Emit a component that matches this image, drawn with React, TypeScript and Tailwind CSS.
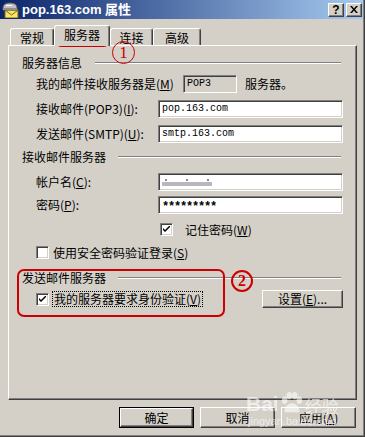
import React from "react";

const CJK = "font-['Noto_Sans_CJK_SC','Noto_Sans',sans-serif]";
const MONO = "font-['Liberation_Mono','Noto_Sans_CJK_SC',monospace]";

const sunken =
  "border border-t-[#808080] border-l-[#808080] border-r-white border-b-white shadow-[inset_1px_1px_0_#404040,inset_-1px_-1px_0_#d4d0c8]";
const raised =
  "border border-t-white border-l-white border-r-[#404040] border-b-[#404040] shadow-[inset_-1px_-1px_0_#808080]";

function U({ c }: { c: string }) {
  return (
    <span>
      (<span className="underline underline-offset-[1px]">{c}</span>)
    </span>
  );
}

function Header({ text, gap = 12 }: { text: string; gap?: number }) {
  return (
    <div className="flex h-[16px] items-center">
      <span className="text-[12px] leading-none text-black">{text}</span>
      <div
        className="h-[2px] flex-1 border-t border-t-[#808080] border-b border-b-white mr-[15px]"
        style={{ marginLeft: gap }}
      />
    </div>
  );
}

function Check({ checked }: { checked: boolean }) {
  return (
    <div className={`w-[13px] h-[13px] bg-white shrink-0 flex items-center justify-center ${sunken}`}>
      {checked && (
        <svg width="7" height="7" viewBox="0 0 7 7">
          <path d="M0 2 L0 4 L2 6 L7 1 L7 -1 L2 4 Z" fill="black" />
        </svg>
      )}
    </div>
  );
}

function Field({ children }: { children?: React.ReactNode }) {
  return (
    <div className={`w-[185px] h-[18px] bg-white flex items-center pl-[3px] ${sunken}`}>{children}</div>
  );
}

function Btn({ children, def, w = 75 }: { children: React.ReactNode; def?: boolean; w?: number }) {
  const inner = (
    <div
      className={`h-full w-full bg-[#d4d0c8] flex items-center justify-center text-[12px] leading-none text-black ${raised}`}
    >
      {children}
    </div>
  );
  return (
    <div className={`h-[21px] ${def ? "border border-black" : ""}`} style={{ width: w }}>
      {inner}
    </div>
  );
}

function Tab({ label, w, selected }: { label: string; w: number; selected?: boolean }) {
  return (
    <div
      className={`bg-[#d4d0c8] border-t border-l border-t-white border-l-white border-r border-r-[#404040] shadow-[inset_-1px_0_0_#808080] rounded-t-[3px] flex justify-center text-[12px] leading-none text-black ${
        selected ? "h-[21px] relative top-[1px] z-10 pt-[3px]" : "h-[17px] pt-[3px]"
      }`}
      style={{ width: w }}
    >
      {label}
    </div>
  );
}

export default function App() {
  return (
    <div
      className={`relative w-[365px] h-[437px] bg-[#d4d0c8] overflow-hidden border-r border-b border-r-[#404040] border-b-[#404040] ${CJK}`}
    >
      <div className="h-full w-full flex flex-col shadow-[inset_-1px_-1px_0_#808080]">
        {/* title bar */}
        <div className="h-[19px] mr-[1px] flex items-center bg-[linear-gradient(to_right,#0a246a,#a6caf0)]">
          <svg width="17" height="16" viewBox="0 0 17 16" className="ml-[2px]">
            <rect x="3" y="8" width="13" height="8" fill="#f8e860" stroke="#806020" strokeWidth="1" />
            <path d="M3.5 8.5 L9.5 13 L15.5 8.5" fill="none" stroke="#806020" />
            <path d="M1 6 Q1 1 8 1 Q15 1 15 6 L15 8 L1 8 Z" fill="#c0c0c0" stroke="#606060" />
            <rect x="1" y="6" width="14" height="2" fill="#909090" />
            <rect x="4" y="3" width="6" height="1" fill="#ffffff" />
          </svg>
          <span className="ml-[3px] text-white font-bold text-[13px] leading-none font-['Liberation_Sans','Noto_Sans_CJK_SC',sans-serif]">
            pop.163.com 属性
          </span>
          <div className="ml-auto flex gap-[2px] mr-[1px]">
            <div className={`w-[16px] h-[14px] bg-[#d4d0c8] flex items-center justify-center ${raised}`}>
              <span className="text-[12px] font-bold leading-none font-['Liberation_Sans',sans-serif]">?</span>
            </div>
            <div className={`w-[16px] h-[14px] bg-[#d4d0c8] flex items-center justify-center ${raised}`}>
              <svg width="8" height="7" viewBox="0 0 8 7">
                <path d="M0 0 L2 0 L4 2.5 L6 0 L8 0 L5 3.5 L8 7 L6 7 L4 4.5 L2 7 L0 7 L3 3.5 Z" fill="black" />
              </svg>
            </div>
          </div>
        </div>

        {/* tabs */}
        <div className="mt-[7px] ml-[10px] h-[19px] flex items-end">
          <Tab label="常规" w={44} />
          <Tab label="服务器" w={56} selected />
          <Tab label="连接" w={43} />
          <Tab label="高级" w={48} />
        </div>

        {/* panel */}
        <div className="ml-[8px] w-[349px] h-[355px] border-t border-l border-t-white border-l-white border-r border-b border-r-[#404040] border-b-[#404040] shadow-[inset_-1px_-1px_0_#808080] flex flex-col pl-[13px] text-[12px] leading-none text-black">
          <div className="mt-[9px]">
            <Header text="服务器信息" gap={13} />
          </div>
          <div className="mt-[4px] h-[18px] flex items-center pl-[14px]">
            <span className="w-[147px]">
              我的邮件接收服务器是<U c="M" />
            </span>
            <div className={`w-[54px] h-[18px] bg-[#d4d0c8] flex items-center pl-[3px] ${MONO} text-[10px] ${sunken}`}>
              POP3
            </div>
            <span className="ml-[8px]">服务器。</span>
          </div>
          <div className="mt-[7px] h-[18px] flex items-center pl-[14px]">
            <span className="w-[122px]">
              接收邮件(POP3)<U c="I" />:
            </span>
            <Field>
              <span className={`${MONO} text-[10px]`}>pop.163.com</span>
            </Field>
          </div>
          <div className="mt-[7px] h-[18px] flex items-center pl-[14px]">
            <span className="w-[122px]">
              发送邮件(SMTP)<U c="U" />:
            </span>
            <Field>
              <span className={`${MONO} text-[10px]`}>smtp.163.com</span>
            </Field>
          </div>

          <div className="mt-[6px]">
            <Header text="接收邮件服务器" gap={12} />
          </div>
          <div className="mt-[8px] h-[18px] flex items-center pl-[14px]">
            <span className="w-[122px]">
              帐户名<U c="C" />:
            </span>
            <Field>
              <div className="flex flex-col gap-[1px]">
                <div className="w-[50px] h-[2px] flex justify-between px-[3px] opacity-60">
                  <div className="w-[2px] h-[2px] bg-[#404040]" />
                  <div className="w-[2px] h-[2px] bg-[#404040]" />
                  <div className="w-[2px] h-[2px] bg-[#404040]" />
                </div>
                <div className="w-[50px] h-[4px] bg-[#b8b8c0] blur-[0.6px]" />
              </div>
            </Field>
          </div>
          <div className="mt-[5px] h-[18px] flex items-center pl-[14px]">
            <span className="w-[122px]">
              密码<U c="P" />:
            </span>
            <Field>
              <span className={`${MONO} text-[12px] tracking-[-1.2px] font-bold pt-[3px]`}>*********</span>
            </Field>
          </div>
          <div className="mt-[9px] h-[13px] flex items-center pl-[138px]">
            <Check checked />
            <span className="ml-[12px]">
              记住密码<U c="W" />
            </span>
          </div>
          <div className="mt-[10px] h-[13px] flex items-center pl-[14px]">
            <Check checked={false} />
            <span className="ml-[4px]">
              使用安全密码验证登录<U c="S" />
            </span>
          </div>

          <div className="mt-[11px]">
            <Header text="发送邮件服务器" gap={12} />
          </div>
          <div className="mt-[4px] h-[18px] flex items-center pl-[14px]">
            <Check checked />
            <span className="ml-[3px] h-[16px] px-[1px] flex items-center border border-dotted border-black">
              我的服务器要求身份验证<U c="V" />
            </span>
            <div className="ml-auto mr-[13px]">
              <div className={`w-[81px] h-[18px] bg-[#d4d0c8] flex items-center justify-center ${raised}`}>
                设置<U c="E" />...
              </div>
            </div>
          </div>
        </div>

        {/* bottom buttons */}
        <div className="mt-[7px] ml-[8px] w-[348px] flex justify-end gap-[6px]">
          <Btn def>确定</Btn>
          <Btn>取消</Btn>
          <Btn>
            应用<U c="A" />
          </Btn>
        </div>
      </div>

      {/* annotations */}
      <div className="absolute left-[56px] top-[25px] w-[53px] h-[22px] border-2 border-[#cc0000] rounded-[5px] pointer-events-none" />
      <div className="absolute left-[112px] top-[41px] w-[23px] h-[23px] rounded-full border-[1.5px] border-[#cc0000] flex items-center justify-center pointer-events-none">
        <span className="text-[#cc0000] text-[17px] leading-none font-['Liberation_Serif',serif]">1</span>
      </div>
      <div className="absolute left-[17px] top-[269px] w-[208px] h-[48px] border-2 border-[#cc0000] rounded-[7px] pointer-events-none" />
      <div className="absolute left-[231px] top-[270px] w-[22px] h-[22px] rounded-full border-[2px] border-[#cc0000] flex items-center justify-center pointer-events-none">
        <span className="text-[#cc0000] text-[16px] font-bold leading-none font-['Liberation_Serif',serif]">2</span>
      </div>

      {/* watermark */}
      <div className="absolute left-[246px] top-[392px] pointer-events-none flex flex-col items-center opacity-60">
        <div className="flex items-end">
          <span className="text-white text-[21px] font-bold leading-none font-['Liberation_Sans',sans-serif]">Bai</span>
          <svg width="24" height="22" viewBox="0 0 26 24" className="mx-[1px]">
            <ellipse cx="5" cy="9" rx="3" ry="4" fill="white" />
            <ellipse cx="10" cy="4" rx="3" ry="4" fill="white" />
            <ellipse cx="16" cy="4" rx="3" ry="4" fill="white" />
            <ellipse cx="21" cy="9" rx="3" ry="4" fill="white" />
            <path d="M5 22 Q4 14 13 12 Q22 14 21 22 Z" fill="white" />
          </svg>
          <span className="text-white text-[17px] leading-none">经验</span>
        </div>
        <span className="text-white text-[11px] leading-none mt-[2px] font-['Liberation_Sans',sans-serif]">
          jingyan.baidu.com
        </span>
      </div>
    </div>
  );
}
